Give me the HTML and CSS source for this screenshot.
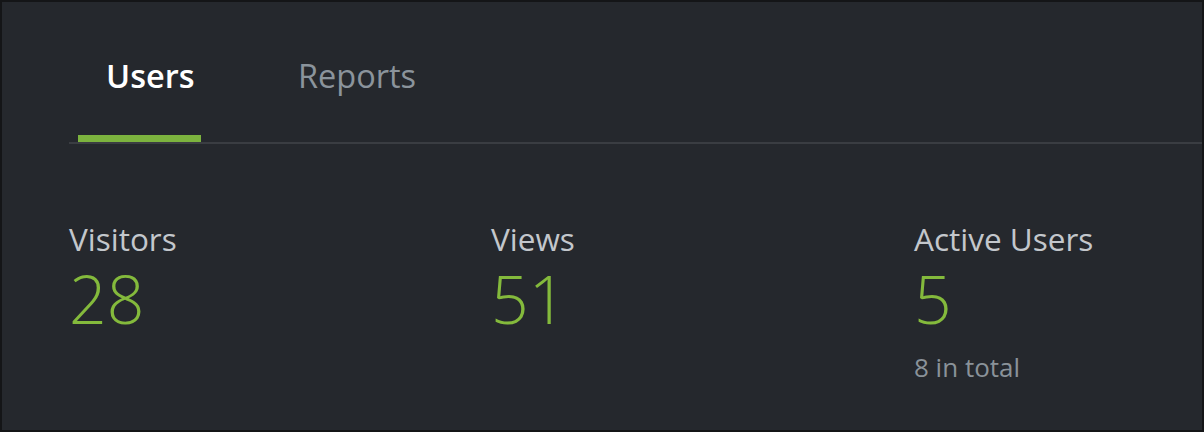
FILE: index.html
```html
<!DOCTYPE html>
<html lang="en">
<head>
<meta charset="utf-8">
<title>Users</title>
<link rel="stylesheet" href="styles.css">
</head>
<body>
<div class="panel">
  <nav class="tabs">
    <div class="tab active">Users</div>
    <div class="tab">Reports</div>
  </nav>
  <section class="stats">
    <div class="stat">
      <div class="label">Visitors</div>
      <div class="value">28</div>
    </div>
    <div class="stat">
      <div class="label">Views</div>
      <div class="value">51</div>
    </div>
    <div class="stat">
      <div class="label">Active Users</div>
      <div class="value">5</div>
      <div class="note">8 in total</div>
    </div>
  </section>
</div>
</body>
</html>
```

FILE: styles.css
```css
html, body {
  margin: 0;
  padding: 0;
  background: #141517;
}
.panel {
  box-sizing: border-box;
  width: 1204px;
  height: 432px;
  border: 2px solid #141517;
  background: #25282d;
  font-family: "Open Sans", "Noto Sans", sans-serif;
  overflow: hidden;
}
.tabs {
  display: flex;
  gap: 69px;
  margin-left: 67px;
  padding-left: 9px;
  border-bottom: 2px solid #3a3d42;
}
.tab {
  box-sizing: border-box;
  padding: 54px 0 39px 28px;
  font-size: 32.5px;
  line-height: 40px;
  color: #8b949c;
  border-bottom: 7px solid transparent;
}
.tab.active {
  width: 123px;
  color: #ffffff;
  font-weight: 600;
  border-bottom-color: #7cb33e;
}
.stats {
  display: grid;
  grid-template-columns: 422px 423px 1fr;
  padding: 76px 0 0 67px;
}
.label {
  font-size: 31.5px;
  line-height: 38px;
  color: #c3c7cc;
}
.value {
  margin-top: 4px;
  font-size: 66px;
  font-weight: 300;
  line-height: 72px;
  color: #84ba3c;
}
.note {
  margin-top: 17px;
  font-size: 26px;
  line-height: 32px;
  color: #8a9299;
}
```
